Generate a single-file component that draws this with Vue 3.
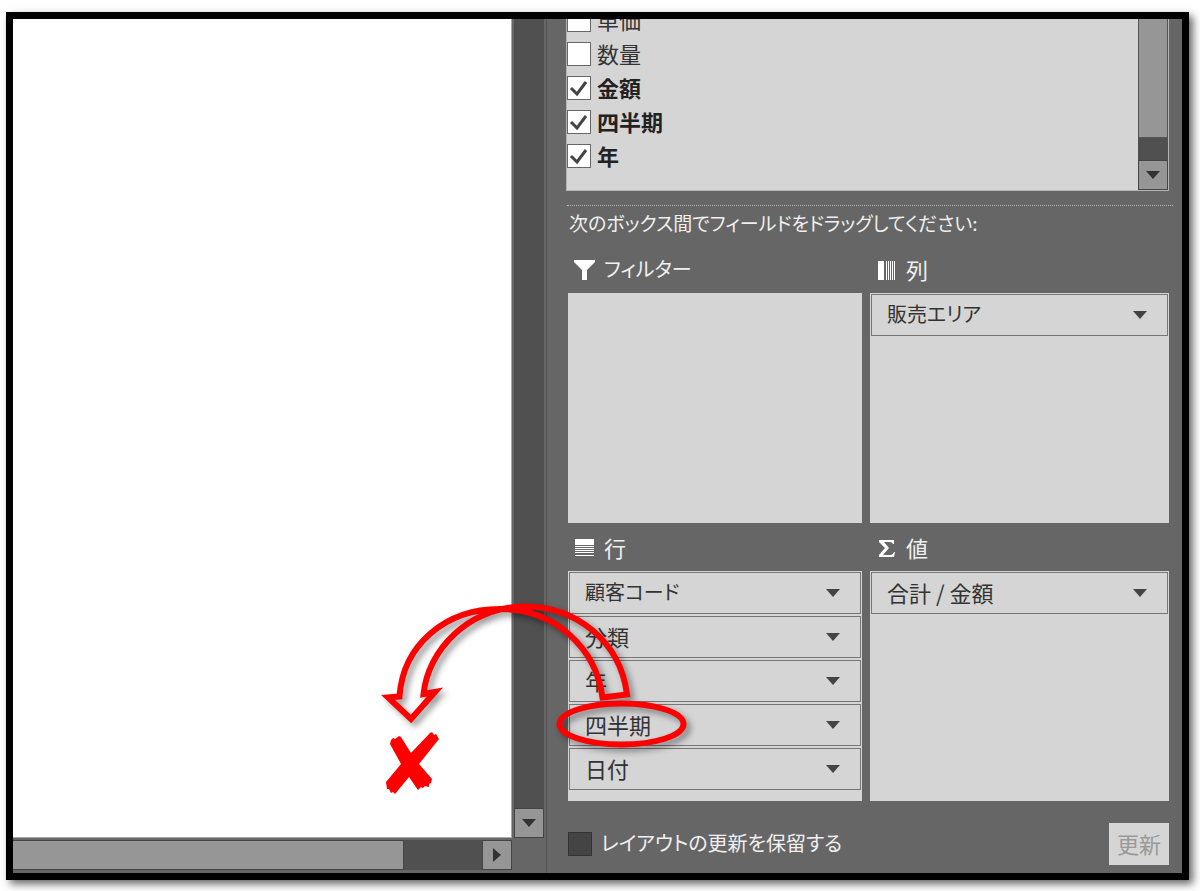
<script setup>
const fields = [
  { name: '単価', checked: false },
  { name: '数量', checked: false },
  { name: '金額', checked: true },
  { name: '四半期', checked: true },
  { name: '年', checked: true },
]

const areas = [
  { id: 'filter', title: 'フィルター', items: [] },
  { id: 'column', title: '列', items: ['販売エリア'] },
  { id: 'row', title: '行', items: ['顧客コード', '分類', '年', '四半期', '日付'] },
  { id: 'value', title: '値', items: ['合計 / 金額'] },
]

const hasKana = (text) => /[\u30a0-\u30ff]/.test(text)
</script>

<template>
  <div class="page">
    <main class="frame">
      <section class="workbook">
        <div class="sheet"></div>
        <div class="vbar">
          <button class="step" type="button" aria-label="下へスクロール">
            <svg width="14" height="8" viewBox="0 0 14 8"><path d="M0 0H14L7 8Z" /></svg>
          </button>
        </div>
        <div class="hbar">
          <div class="hthumb"></div>
          <button class="step right" type="button" aria-label="右へスクロール">
            <svg width="8" height="14" viewBox="0 0 8 14"><path d="M0 0V14L8 7Z" /></svg>
          </button>
        </div>
      </section>

      <section class="pane">
        <div class="list">
          <div class="rows">
            <label v-for="f in fields" :key="f.name" class="field" :class="{ on: f.checked }">
              <input type="checkbox" class="tick" :checked="f.checked" />
              <svg v-if="f.checked" class="mark" width="24" height="24" viewBox="0 0 24 24">
                <path d="M4 12L10 18L19 6" />
              </svg>
              <span>{{ f.name }}</span>
            </label>
          </div>
          <div class="listbar">
            <div class="lthumb"></div>
            <button class="step" type="button" aria-label="一覧を下へスクロール">
              <svg width="14" height="8" viewBox="0 0 14 8"><path d="M0 0H14L7 8Z" /></svg>
            </button>
          </div>
        </div>

        <p class="hint">次のボックス間でフィールドをドラッグしてください:</p>

        <div class="areas">
          <div v-for="a in areas" :key="a.id" class="area">
            <h2 class="title">
              <svg v-if="a.id === 'filter'" width="22" height="22" viewBox="0 0 22 22">
                <path d="M0 1H21V3L13 11V21H8V11L0 3Z" />
              </svg>
              <svg v-else-if="a.id === 'column'" width="22" height="22" viewBox="0 0 22 22">
                <path d="M2 2H8V21H2ZM10 2H11V21H10ZM12 2H13V21H12ZM14 2H15V21H14ZM16 2H17V21H16ZM18 2H19V21H18Z" />
              </svg>
              <svg v-else-if="a.id === 'row'" width="22" height="22" viewBox="0 0 22 22">
                <path d="M1 2H20V8H1ZM1 9H20V10H1ZM1 11H20V12H1ZM1 13H20V14H1ZM1 15H20V16H1ZM1 18H20V19H1Z" />
              </svg>
              <svg v-else width="22" height="22" viewBox="0 0 22 22">
                <path d="M3 3H18V7H17Q16 5 14 5H8L13 11L7 18H14Q17 18 18 15H19L18 20H3V18L9 11L3 5Z" />
              </svg>
              <span :class="{ kana: hasKana(a.title) }">{{ a.title }}</span>
            </h2>
            <div class="box">
              <button v-for="i in a.items" :key="i" type="button" class="item">
                <span :class="{ kana: hasKana(i) }">{{ i }}</span>
                <svg width="14" height="8" viewBox="0 0 14 8"><path d="M0 0H14L7 8Z" /></svg>
              </button>
            </div>
          </div>
        </div>

        <footer class="foot">
          <label class="defer">
            <input type="checkbox" class="darktick" />
            <span class="kana">レイアウトの更新を保留する</span>
          </label>
          <button type="button" class="update" disabled>更新</button>
        </footer>

        <svg class="notes" width="340" height="220" viewBox="370 590 340 220" aria-hidden="true">
          <g class="ink">
            <path d="M602.5 697.5L627 694.5C620 640 575 606.5 525 606.5C468 607 428 650 423.5 694L435 692L411 719L388 697.5L399.5 696.5C403 645 445 609 500 609C555 609 596 648 602.5 697.5Z" />
            <ellipse cx="621.5" cy="724" rx="62" ry="20.5" />
          </g>
          <path class="cross" d="M391 740L393 738L395 739L399 736L401 737L411 753L430 733L432 732L434 735L436 734L439 739L419 764L432 779L431 783L429 784L429 787L425 786L423 788L421 787L418 790L409 777L395 794L393 792L391 793L389 789L387 789L386 782L401 764L390 744Z" />
        </svg>
      </section>
    </main>
  </div>
</template>

<style>
body {
  margin: 0;
  background: #fff;
}
</style>

<style scoped>
* {
  box-sizing: border-box;
}
.page {
  min-height: 100vh;
  padding: 12px 11px 11px 6px;
  display: flex;
  overflow: hidden;
  font-family: "Noto Sans CJK JP", sans-serif;
  font-size: 22px;
  line-height: 32px;
  color: #333;
}
.frame {
  flex: 1;
  display: grid;
  grid-template-columns: 531fr 638fr;
  border: 7px solid #000;
  background: #666;
  box-shadow: 4px 4px 8px rgba(0, 0, 0, 0.6);
}
button {
  font: inherit;
  color: inherit;
  margin: 0;
  padding: 0;
}
.kana {
  font-size: 20px;
}
.workbook {
  display: grid;
  grid-template-columns: 1fr 30px;
  grid-template-rows: 1fr 30px;
  gap: 2px 2px;
  padding-bottom: 3px;
}
.sheet {
  background: #fff;
  border-right: 1px solid #aaa;
  border-bottom: 1px solid #aaa;
}
.vbar {
  background: #505050;
  display: flex;
  flex-direction: column;
  justify-content: flex-end;
}
.hbar {
  background: #505050;
  display: flex;
  justify-content: space-between;
}
.hthumb {
  flex: 0 1 391px;
  background: #969696;
  border: solid #444;
  border-width: 1px 1px 1px 0;
}
.step {
  height: 30px;
  width: 100%;
  flex: none;
  display: flex;
  align-items: center;
  justify-content: center;
  background: #969696;
  border: 1px solid #444;
  fill: #333;
}
.step.right {
  width: 30px;
}
.pane {
  position: relative;
  border-left: 1px solid #555;
  margin-left: 2px;
  padding: 0 13px 8px 19px;
  display: flex;
  flex-direction: column;
}
.list {
  height: 172px;
  display: flex;
  background: #d5d5d5;
  border: solid #b4b4b4;
  border-width: 0 1px 1px;
}
.rows {
  flex: 1;
  display: flex;
  flex-direction: column;
  justify-content: flex-end;
  padding-bottom: 17px;
  overflow: hidden;
}
.field {
  position: relative;
  height: 34px;
  flex: none;
  display: flex;
  align-items: center;
  gap: 6px;
}
.field span,
.item span,
.title span,
.defer span,
.update {
  padding-bottom: 3px;
}
.on {
  font-weight: 700;
  color: #222;
}
.tick,
.darktick {
  appearance: none;
  margin: 0;
  width: 24px;
  height: 24px;
  background: #fff;
  border: 1px solid #666;
}
.mark {
  position: absolute;
  left: 0;
  fill: none;
  stroke: #444;
  stroke-width: 3;
}
.listbar {
  width: 30px;
  background: #505050;
  display: flex;
  flex-direction: column;
}
.lthumb {
  flex: 1;
  margin-bottom: 22px;
  background: #969696;
  border: solid #555;
  border-width: 0 1px 1px;
}
.hint {
  margin: 14px -4px 0 1px;
  padding: 1px 0 0 2px;
  border-top: 1px dotted #bbb;
  font-size: 19px;
  color: #f0f0f0;
  font-feature-settings: "palt";
}
.areas {
  margin-left: 2px;
  display: grid;
  grid-template-columns: 294fr 299fr;
  column-gap: 8px;
}
.title {
  margin: 0;
  height: 48px;
  padding: 2px 0 0 6px;
  display: flex;
  align-items: center;
  gap: 8px;
  font-size: 22px;
  font-weight: 400;
  color: #f0f0f0;
  fill: #fff;
  font-feature-settings: "palt";
}
.area:nth-child(-n + 2) .title {
  height: 54px;
  padding-top: 8px;
}
.box {
  height: 230px;
  padding: 1px;
  background: #d5d5d5;
  display: flex;
  flex-direction: column;
  gap: 2px;
}
.item {
  height: 42px;
  padding: 0 20px 0 15px;
  display: flex;
  align-items: center;
  justify-content: space-between;
  background: #d5d5d5;
  border: 1px solid #777;
  fill: #444;
  font-feature-settings: "palt";
}
.foot {
  margin: auto 0 0 2px;
  display: flex;
  align-items: center;
  justify-content: space-between;
}
.defer {
  display: flex;
  align-items: center;
  gap: 9px;
  color: #f0f0f0;
  font-feature-settings: "palt";
}
.darktick {
  background: #444;
  border-color: #333;
}
.update {
  width: 60px;
  height: 42px;
  border: 0;
  background: #d5d5d5;
  color: #999;
}
.notes {
  position: absolute;
  left: -177px;
  top: 571px;
  pointer-events: none;
}
.ink {
  fill: none;
  stroke: #f00;
  stroke-width: 6;
  filter: drop-shadow(4px 4px 3px rgba(0, 0, 0, 0.4));
}
.cross {
  fill: #f00;
}
</style>
